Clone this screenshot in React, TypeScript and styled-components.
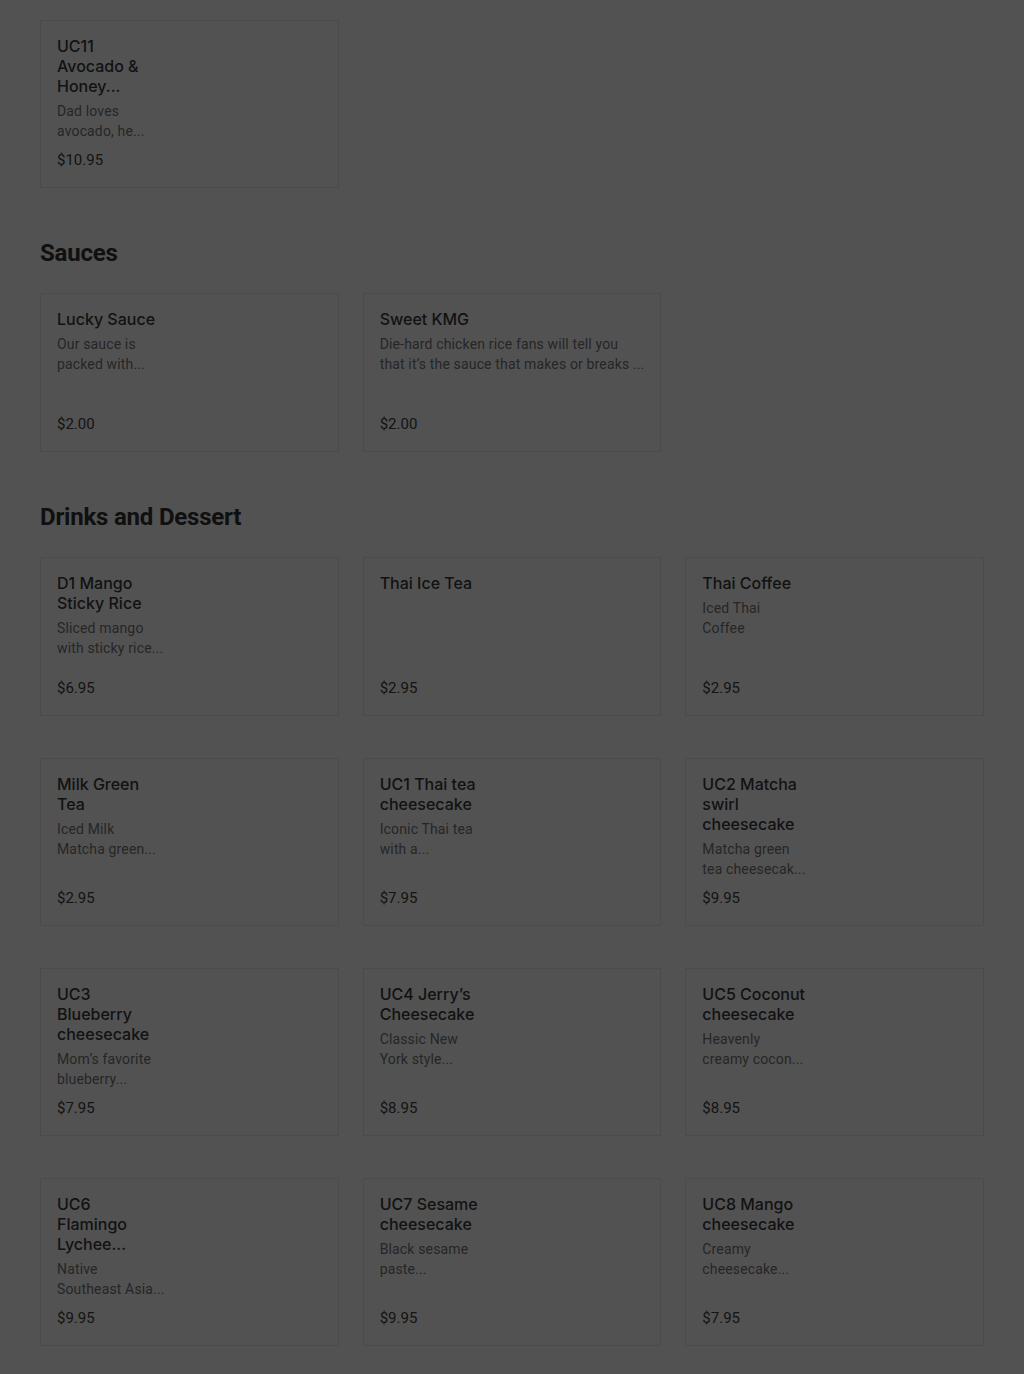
import React from "react";
import styled, { createGlobalStyle } from "styled-components";

const GlobalStyle = createGlobalStyle`
  html, body {
    margin: 0;
    padding: 0;
    background: #ffffff;
  }
  body {
    font-family: Roboto, "Liberation Sans", Arial, sans-serif;
    color: #000000;
  }
`;

const Page = styled.main`
  padding: 20px 40px 28px;
  display: flex;
  flex-direction: column;
  gap: 49px;
`;

const Section = styled.section`
  display: flex;
  flex-direction: column;
  gap: 24px;
`;

const SectionTitle = styled.h2`
  margin: 0;
  font-family: Roboto, "Liberation Sans", Arial, sans-serif;
  font-size: 24px;
  line-height: 32px;
  font-weight: 700;
  letter-spacing: -0.2px;
  color: #333333;
`;

const Grid = styled.div`
  display: grid;
  grid-template-columns: repeat(3, minmax(0, 1fr));
  column-gap: 24px;
  row-gap: 42px;
`;

const Card = styled.div`
  border: 1px solid #e8e8e8;
  background: #ffffff;
  padding: 15px 16px 17px;
  display: flex;
  min-width: 0;
`;

const TextCol = styled.div<{ $wide?: boolean }>`
  width: ${(p) => (p.$wide ? "100%" : "110px")};
  min-width: 0;
  min-height: 125px;
  display: flex;
  flex-direction: column;
`;

const ItemName = styled.div`
  font-family: Inter, Roboto, "Liberation Sans", sans-serif;
  font-size: 16px;
  line-height: 20px;
  font-weight: 500;
  color: #3a3a3a;
  white-space: pre;
`;

const ItemDesc = styled.div`
  margin-top: 5px;
  font-size: 14px;
  line-height: 20px;
  font-weight: 400;
  letter-spacing: 0.15px;
  color: #767676;
  white-space: pre;
  overflow: hidden;
`;

const Price = styled.div`
  margin-top: auto;
  padding-top: 9px;
  font-size: 15px;
  line-height: 20px;
  font-weight: 400;
  color: #404040;
`;

const Overlay = styled.div`
  position: fixed;
  inset: 0;
  background: rgba(0, 0, 0, 0.68);
  pointer-events: none;
`;

type Item = { name: string; desc?: string; price: string; wide?: boolean };
type Group = { title?: string; items: Item[] };

const groups: Group[] = [
  {
    items: [
      {
        name: "UC11\nAvocado &\nHoney...",
        desc: "Dad loves\navocado, he...",
        price: "$10.95",
      },
    ],
  },
  {
    title: "Sauces",
    items: [
      { name: "Lucky Sauce", desc: "Our sauce is\npacked with...", price: "$2.00" },
      {
        name: "Sweet KMG",
        desc: "Die-hard chicken rice fans will tell you\nthat it\u2019s the sauce that makes or breaks ...",
        price: "$2.00",
        wide: true,
      },
    ],
  },
  {
    title: "Drinks and Dessert",
    items: [
      { name: "D1 Mango\nSticky Rice", desc: "Sliced mango\nwith sticky rice...", price: "$6.95" },
      { name: "Thai Ice Tea", price: "$2.95", wide: true },
      { name: "Thai Coffee", desc: "Iced Thai\nCoffee", price: "$2.95" },
      { name: "Milk Green\nTea", desc: "Iced Milk\nMatcha green...", price: "$2.95" },
      { name: "UC1 Thai tea\ncheesecake", desc: "Iconic Thai tea\nwith a...", price: "$7.95" },
      { name: "UC2 Matcha\nswirl\ncheesecake", desc: "Matcha green\ntea cheesecak...", price: "$9.95" },
      { name: "UC3\nBlueberry\ncheesecake", desc: "Mom\u2019s favorite\nblueberry...", price: "$7.95" },
      { name: "UC4 Jerry\u2019s\nCheesecake", desc: "Classic New\nYork style...", price: "$8.95" },
      { name: "UC5 Coconut\ncheesecake", desc: "Heavenly\ncreamy cocon...", price: "$8.95" },
      { name: "UC6\nFlamingo\nLychee...", desc: "Native\nSoutheast Asia...", price: "$9.95" },
      { name: "UC7 Sesame\ncheesecake", desc: "Black sesame\npaste...", price: "$9.95" },
      { name: "UC8 Mango\ncheesecake", desc: "Creamy\ncheesecake...", price: "$7.95" },
    ],
  },
];

function MenuCard({ item }: { item: Item }) {
  return (
    <Card>
      <TextCol $wide={item.wide}>
        <ItemName>{item.name}</ItemName>
        {item.desc && <ItemDesc>{item.desc}</ItemDesc>}
        <Price>{item.price}</Price>
      </TextCol>
    </Card>
  );
}

export default function App() {
  return (
    <>
      <GlobalStyle />
      <Page>
        {groups.map((g, i) => (
          <Section key={i}>
            {g.title && <SectionTitle>{g.title}</SectionTitle>}
            <Grid>
              {g.items.map((it) => (
                <MenuCard key={it.name} item={it} />
              ))}
            </Grid>
          </Section>
        ))}
      </Page>
      <Overlay />
    </>
  );
}
